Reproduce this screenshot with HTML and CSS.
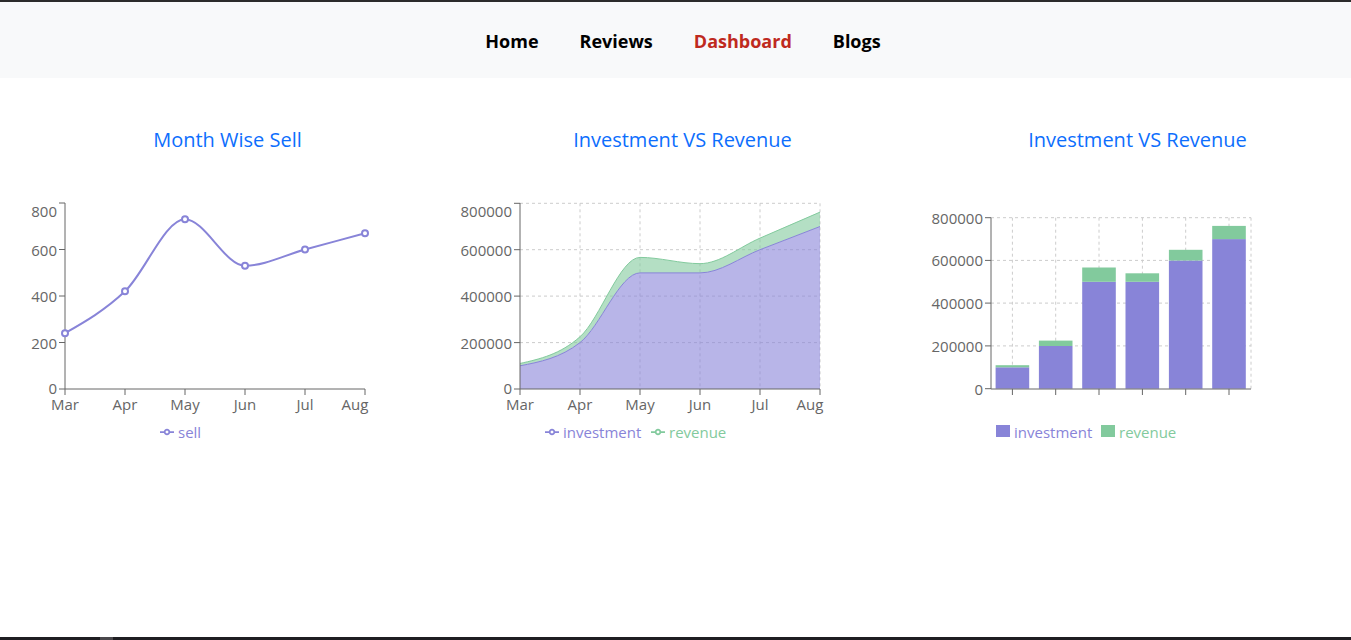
FILE: index.html
```html
<!DOCTYPE html>
<html lang="en">
<head>
<meta charset="utf-8">
<title>Dashboard</title>
<link rel="stylesheet" href="styles.css">
</head>
<body>
<div class="topline"></div>
<nav class="navbar">
  <a class="nav-link" href="#">Home</a>
  <a class="nav-link" href="#">Reviews</a>
  <a class="nav-link active" href="#">Dashboard</a>
  <a class="nav-link" href="#">Blogs</a>
</nav>
<main class="charts">
  <section class="chart">
    <h5 class="chart-title">Month Wise Sell</h5>
    <svg class="chart-svg" viewBox="0 180 455 280">
      <g class="axis">
        <line x1="65" y1="203" x2="65" y2="389"/>
        <line x1="59" y1="389" x2="65" y2="389"/>
        <line x1="59" y1="342.5" x2="65" y2="342.5"/>
        <line x1="59" y1="296" x2="65" y2="296"/>
        <line x1="59" y1="249.5" x2="65" y2="249.5"/>
        <line x1="59" y1="203" x2="65" y2="203"/>
        <line x1="65" y1="389" x2="365" y2="389"/>
        <line x1="65" y1="389" x2="65" y2="395"/>
        <line x1="125" y1="389" x2="125" y2="395"/>
        <line x1="185" y1="389" x2="185" y2="395"/>
        <line x1="245" y1="389" x2="245" y2="395"/>
        <line x1="305" y1="389" x2="305" y2="395"/>
        <line x1="365" y1="389" x2="365" y2="395"/>
      </g>
      <g class="tick-y">
        <text x="57" y="388">0</text>
        <text x="57" y="342.5">200</text>
        <text x="57" y="296">400</text>
        <text x="57" y="249.5">600</text>
        <text x="57" y="211">800</text>
      </g>
      <g class="tick-x">
        <text x="65" y="404">Mar</text>
        <text x="125" y="404">Apr</text>
        <text x="185" y="404">May</text>
        <text x="245" y="404">Jun</text>
        <text x="305" y="404">Jul</text>
        <text x="355" y="404">Aug</text>
      </g>
      <path class="sell-line" d="M65,333.2 C85,321.77 105,310.33 125,291.35 C145,272.37 165,219.3 185,219.3 C205,219.3 225,265.8 245,265.8 C265,265.8 285,254.93 305,249.5 C325,244.07 345,238.63 365,233.2"/>
      <g class="sell-dots">
        <circle cx="65" cy="333.2" r="3"/>
        <circle cx="125" cy="291.35" r="3"/>
        <circle cx="185" cy="219.3" r="3"/>
        <circle cx="245" cy="265.8" r="3"/>
        <circle cx="305" cy="249.5" r="3"/>
        <circle cx="365" cy="233.2" r="3"/>
      </g>
      <svg x="160" y="425" width="14" height="14" viewBox="0 0 32 32">
        <path class="legend-line purple" d="M0,16h10.67A5.33,5.33,0,1,1,21.33,16H32M21.33,16A5.33,5.33,0,1,1,10.67,16"/>
      </svg>
      <text class="legend-text purple-text" x="178" y="432">sell</text>
    </svg>
  </section>

  <section class="chart">
    <h5 class="chart-title">Investment VS Revenue</h5>
    <svg class="chart-svg" viewBox="455 180 455 280">
      <g class="grid">
        <line x1="520" y1="203.3" x2="820" y2="203.3"/>
        <line x1="520" y1="249.7" x2="820" y2="249.7"/>
        <line x1="520" y1="296.1" x2="820" y2="296.1"/>
        <line x1="520" y1="342.6" x2="820" y2="342.6"/>
        <line x1="580" y1="203.3" x2="580" y2="389"/>
        <line x1="640" y1="203.3" x2="640" y2="389"/>
        <line x1="700" y1="203.3" x2="700" y2="389"/>
        <line x1="760" y1="203.3" x2="760" y2="389"/>
        <line x1="820" y1="203.3" x2="820" y2="389"/>
      </g>
      <path class="area-inv" d="M520,365.8 C540,361.93 560,358.07 580,342.6 C600,327.13 620,272.9 640,272.9 C660,272.9 680,272.9 700,272.9 C720,272.9 740,257.43 760,249.7 C780,241.97 800,234.23 820,226.5 L820,389 L520,389 Z"/>
      <path class="area-rev" d="M520,363.47 C540,358.96 560,354.45 580,336.77 C600,319.09 620,257.4 640,257.4 C660,257.4 680,263.65 700,263.65 C720,263.65 740,246.71 760,238.12 C780,229.53 800,220.83 820,212.12 L820,226.5 C800,234.23 780,241.97 760,249.7 C740,257.43 720,272.9 700,272.9 C680,272.9 660,272.9 640,272.9 C620,272.9 600,327.13 580,342.6 C560,358.07 540,361.93 520,365.8 Z"/>
      <path class="stroke-inv" d="M520,365.8 C540,361.93 560,358.07 580,342.6 C600,327.13 620,272.9 640,272.9 C660,272.9 680,272.9 700,272.9 C720,272.9 740,257.43 760,249.7 C780,241.97 800,234.23 820,226.5"/>
      <path class="stroke-rev" d="M520,363.47 C540,358.96 560,354.45 580,336.77 C600,319.09 620,257.4 640,257.4 C660,257.4 680,263.65 700,263.65 C720,263.65 740,246.71 760,238.12 C780,229.53 800,220.83 820,212.12"/>
      <g class="axis">
        <line x1="520" y1="203" x2="520" y2="389"/>
        <line x1="514" y1="389" x2="520" y2="389"/>
        <line x1="514" y1="342.6" x2="520" y2="342.6"/>
        <line x1="514" y1="296.1" x2="520" y2="296.1"/>
        <line x1="514" y1="249.7" x2="520" y2="249.7"/>
        <line x1="514" y1="203.3" x2="520" y2="203.3"/>
        <line x1="520" y1="389" x2="820" y2="389"/>
        <line x1="520" y1="389" x2="520" y2="395"/>
        <line x1="580" y1="389" x2="580" y2="395"/>
        <line x1="640" y1="389" x2="640" y2="395"/>
        <line x1="700" y1="389" x2="700" y2="395"/>
        <line x1="760" y1="389" x2="760" y2="395"/>
        <line x1="820" y1="389" x2="820" y2="395"/>
      </g>
      <g class="tick-y">
        <text x="512" y="388">0</text>
        <text x="512" y="342.6">200000</text>
        <text x="512" y="296.1">400000</text>
        <text x="512" y="249.7">600000</text>
        <text x="512" y="211">800000</text>
      </g>
      <g class="tick-x">
        <text x="520" y="404">Mar</text>
        <text x="580" y="404">Apr</text>
        <text x="640" y="404">May</text>
        <text x="700" y="404">Jun</text>
        <text x="760" y="404">Jul</text>
        <text x="810" y="404">Aug</text>
      </g>
      <svg x="545" y="425" width="14" height="14" viewBox="0 0 32 32">
        <path class="legend-line purple" d="M0,16h10.67A5.33,5.33,0,1,1,21.33,16H32M21.33,16A5.33,5.33,0,1,1,10.67,16"/>
      </svg>
      <text class="legend-text purple-text" x="563" y="432">investment</text>
      <svg x="651" y="425" width="14" height="14" viewBox="0 0 32 32">
        <path class="legend-line green" d="M0,16h10.67A5.33,5.33,0,1,1,21.33,16H32M21.33,16A5.33,5.33,0,1,1,10.67,16"/>
      </svg>
      <text class="legend-text green-text" x="669" y="432">revenue</text>
    </svg>
  </section>

  <section class="chart">
    <h5 class="chart-title">Investment VS Revenue</h5>
    <svg class="chart-svg" viewBox="910 180 455 280">
      <g class="grid">
        <line x1="991" y1="217.7" x2="1251" y2="217.7"/>
        <line x1="991" y1="260.4" x2="1251" y2="260.4"/>
        <line x1="991" y1="303.1" x2="1251" y2="303.1"/>
        <line x1="991" y1="345.9" x2="1251" y2="345.9"/>
        <line x1="1012.4" y1="217.7" x2="1012.4" y2="388.7"/>
        <line x1="1055.7" y1="217.7" x2="1055.7" y2="388.7"/>
        <line x1="1099" y1="217.7" x2="1099" y2="388.7"/>
        <line x1="1142.4" y1="217.7" x2="1142.4" y2="388.7"/>
        <line x1="1185.7" y1="217.7" x2="1185.7" y2="388.7"/>
        <line x1="1229" y1="217.7" x2="1229" y2="388.7"/>
        <line x1="1251" y1="217.7" x2="1251" y2="388.7"/>
      </g>
      <g class="bars-inv">
        <rect x="995.6" y="367.3" width="33.6" height="21.4"/>
        <rect x="1038.9" y="346" width="33.6" height="42.7"/>
        <rect x="1082.2" y="281.8" width="33.6" height="106.9"/>
        <rect x="1125.5" y="281.8" width="33.6" height="106.9"/>
        <rect x="1168.9" y="260.5" width="33.6" height="128.2"/>
        <rect x="1212.2" y="239.1" width="33.6" height="149.6"/>
      </g>
      <g class="bars-rev">
        <rect x="995.6" y="365.2" width="33.6" height="2.1"/>
        <rect x="1038.9" y="340.6" width="33.6" height="5.4"/>
        <rect x="1082.2" y="267.5" width="33.6" height="14.3"/>
        <rect x="1125.5" y="273.3" width="33.6" height="8.5"/>
        <rect x="1168.9" y="249.8" width="33.6" height="10.7"/>
        <rect x="1212.2" y="225.9" width="33.6" height="13.2"/>
      </g>
      <g class="axis">
        <line x1="991" y1="217.7" x2="991" y2="389"/>
        <line x1="985" y1="388.7" x2="991" y2="388.7"/>
        <line x1="985" y1="345.9" x2="991" y2="345.9"/>
        <line x1="985" y1="303.1" x2="991" y2="303.1"/>
        <line x1="985" y1="260.4" x2="991" y2="260.4"/>
        <line x1="985" y1="217.7" x2="991" y2="217.7"/>
        <line x1="991" y1="389" x2="1251" y2="389"/>
        <line x1="1012.4" y1="389" x2="1012.4" y2="395"/>
        <line x1="1055.7" y1="389" x2="1055.7" y2="395"/>
        <line x1="1099" y1="389" x2="1099" y2="395"/>
        <line x1="1142.4" y1="389" x2="1142.4" y2="395"/>
        <line x1="1185.7" y1="389" x2="1185.7" y2="395"/>
        <line x1="1229" y1="389" x2="1229" y2="395"/>
      </g>
      <g class="tick-y">
        <text x="983" y="388.7">0</text>
        <text x="983" y="345.9">200000</text>
        <text x="983" y="303.1">400000</text>
        <text x="983" y="260.4">600000</text>
        <text x="983" y="217.7">800000</text>
      </g>
      <rect class="legend-square purple-fill" x="996" y="425" width="14" height="12"/>
      <text class="legend-text purple-text" x="1014" y="432">investment</text>
      <rect class="legend-square green-fill" x="1101" y="425" width="14" height="12"/>
      <text class="legend-text green-text" x="1119" y="432">revenue</text>
    </svg>
  </section>
</main>
<footer class="taskbar"><span class="taskbar-thumb"></span></footer>
</body>
</html>
```
FILE: styles.css
```css
html, body {
  margin: 0;
  padding: 0;
}

body {
  font-family: "Open Sans", "Noto Sans", sans-serif;
  background: #ffffff;
  height: 100vh;
  overflow: hidden;
  display: flex;
  flex-direction: column;
}

.topline {
  height: 2px;
  background: #2b2b2b;
  flex: none;
}

.navbar {
  flex: none;
  height: 76px;
  padding-left: 15px;
  background: #f8f9fa;
  display: flex;
  justify-content: center;
  align-items: center;
  gap: 41px;
}

.nav-link {
  font-size: 18px;
  font-weight: 700;
  line-height: 24px;
  padding-top: 2px;
  color: #000000;
  text-decoration: none;
}

.nav-link.active {
  color: #bf2a1e;
}

.charts {
  flex: none;
  display: grid;
  grid-template-columns: repeat(3, 455px);
  margin-top: 50px;
}

.chart-title {
  margin: 0 0 29px;
  font-size: 20px;
  font-weight: 500;
  line-height: 23px;
  text-align: center;
  color: #0d6efd;
}

.chart-svg {
  display: block;
  width: 455px;
  height: 280px;
  overflow: visible;
}

.axis line {
  stroke: #666666;
  stroke-width: 1;
  fill: none;
}

.grid line {
  stroke: #cccccc;
  stroke-dasharray: 3 3;
  stroke-width: 1;
}

.tick-y text,
.tick-x text {
  font-size: 15px;
  fill: #666666;
  dominant-baseline: central;
}

.tick-y text {
  text-anchor: end;
}

.tick-x text {
  text-anchor: middle;
}

.sell-line {
  fill: none;
  stroke: #8884d8;
  stroke-width: 2;
}

.sell-dots circle {
  fill: #ffffff;
  stroke: #8884d8;
  stroke-width: 2;
}

.area-inv {
  fill: #8884d8;
  fill-opacity: 0.6;
}

.area-rev {
  fill: #82ca9d;
  fill-opacity: 0.6;
}

.stroke-inv {
  fill: none;
  stroke: #8884d8;
  stroke-width: 1;
}

.stroke-rev {
  fill: none;
  stroke: #82ca9d;
  stroke-width: 1;
}

.bars-inv rect {
  fill: #8884d8;
}

.bars-rev rect {
  fill: #82ca9d;
}

.legend-line {
  fill: none;
  stroke-width: 4;
}

.legend-line.purple {
  stroke: #8884d8;
}

.legend-line.green {
  stroke: #82ca9d;
}

.legend-text {
  font-size: 15px;
  dominant-baseline: central;
}

.purple-text {
  fill: #8884d8;
}

.green-text {
  fill: #82ca9d;
}

.purple-fill {
  fill: #8884d8;
}

.green-fill {
  fill: #82ca9d;
}

.taskbar {
  margin-top: auto;
  flex: none;
  height: 3px;
  background: #1f1e22;
  display: flex;
}

.taskbar-thumb {
  margin-left: 100px;
  width: 13px;
  background: #4a484c;
}
```
